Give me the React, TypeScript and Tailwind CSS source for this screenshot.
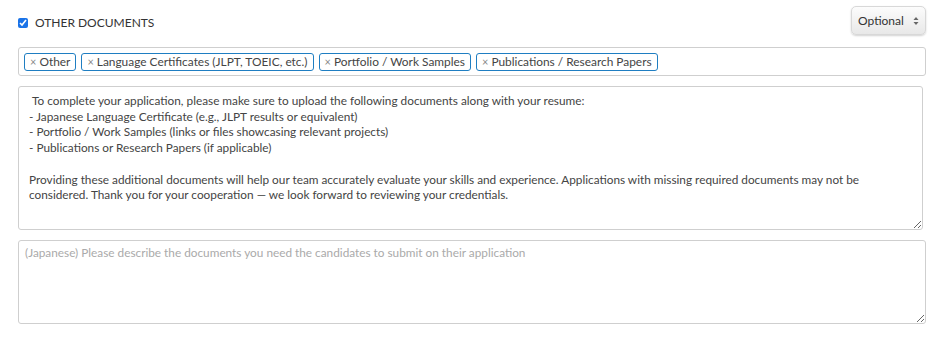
import React from "react";

const tags = [
  "Other",
  "Language Certificates (JLPT, TOEIC, etc.)",
  "Portfolio / Work Samples",
  "Publications / Research Papers",
];

const bodyText = ` To complete your application, please make sure to upload the following documents along with your resume:
- Japanese Language Certificate (e.g., JLPT results or equivalent)
- Portfolio / Work Samples (links or files showcasing relevant projects)
- Publications or Research Papers (if applicable)

Providing these additional documents will help our team accurately evaluate your skills and experience. Applications with missing required documents may not be considered. Thank you for your cooperation — we look forward to reviewing your credentials.`;

function Tag({ label }: { label: string }) {
  return (
    <span className="flex h-[18px] items-center rounded-[3px] border border-[#1f7ec2] bg-white px-[5px] text-[11.9px] leading-none text-[#444]">
      <span className="mr-[3px] text-[11px] text-[#888]">×</span>
      {label}
    </span>
  );
}

export default function App() {
  return (
    <div className="w-[945px] h-[339px] bg-white font-['Lato','Liberation_Sans',sans-serif] text-[#444]">
      <div className="flex flex-col pl-[18px] pr-[19px] pt-[6px]">
        {/* header row */}
        <div className="flex h-[29px] items-start justify-between">
          <label className="mt-[10px] flex items-center gap-[7px] text-[12px] leading-[14px] text-[#333]">
            <input type="checkbox" defaultChecked className="m-0 h-[10px] w-[10px] accent-[#1a73e8]" />
            OTHER DOCUMENTS
          </label>
          <div className="flex h-[29px] w-[75px] items-center justify-between rounded-[5px] border border-[#d8d8d8] bg-gradient-to-b from-[#fcfcfc] to-[#e8e8e8] pl-[6px] pr-[6px] text-[12px] text-[#333] shadow-[0_1px_2px_rgba(0,0,0,0.18)]">
            <span>Optional</span>
            <svg width="6" height="10" viewBox="0 0 6 10">
              <path d="M3 1 L5.5 4 L0.5 4 Z" fill="#666" />
              <path d="M3 9 L5.5 6 L0.5 6 Z" fill="#666" />
            </svg>
          </div>
        </div>

        {/* tag box */}
        <div className="mt-[12px] flex h-[29px] items-center gap-[5px] rounded-[3px] border border-[#cfcfcf] px-[5px]">
          {tags.map((t) => (
            <Tag key={t} label={t} />
          ))}
        </div>

        {/* description */}
        <textarea
          defaultValue={bodyText}
          className="mt-[10px] h-[144px] w-[905px] resize-y rounded-[3px] border border-[#cfcfcf] px-[10px] pt-[6px] text-[11.8px] leading-[15.7px] text-[#444] outline-none"
        />

        {/* japanese */}
        <textarea
          placeholder="(Japanese) Please describe the documents you need the candidates to submit on their application"
          className="mt-[10px] h-[84px] w-full resize-y rounded-[3px] border border-[#cfcfcf] px-[6px] pt-[4px] text-[11.8px] leading-[15.7px] text-[#444] outline-none placeholder:text-[#aaa]"
        />
      </div>
    </div>
  );
}
